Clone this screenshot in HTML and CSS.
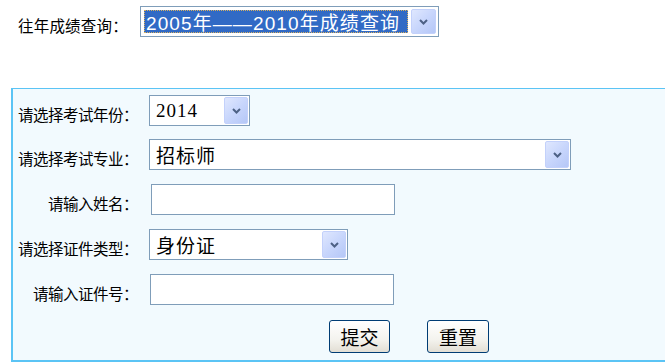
FILE: index.html
```html
<!DOCTYPE html>
<html lang="zh-CN">
<head>
<meta charset="utf-8">
<title>成绩查询</title>
<link rel="stylesheet" href="styles.css">
</head>
<body>
<div class="top">
  <span class="top-label">往年成绩查询：</span>
  <div class="sel sel-top">
    <span class="sel-text"><span class="hl">2005年——2010年成绩查询</span></span>
    <span class="sel-btn"><svg width="9" height="6" viewBox="0 0 9 6"><path d="M1 1 L4.5 4.5 L8 1" fill="none" stroke="#4d6185" stroke-width="2"/></svg></span>
  </div>
</div>

<form class="panel">
  <div class="grid">
    <label class="lbl">请选择考试年份：</label>
    <div class="ctl"><div class="sel sel-year"><span class="sel-text serif">2014</span><span class="sel-btn"><svg width="9" height="6" viewBox="0 0 9 6"><path d="M1 1 L4.5 4.5 L8 1" fill="none" stroke="#4d6185" stroke-width="2"/></svg></span></div></div>

    <label class="lbl">请选择考试专业：</label>
    <div class="ctl"><div class="sel sel-major"><span class="sel-text cjk">招标师</span><span class="sel-btn"><svg width="9" height="6" viewBox="0 0 9 6"><path d="M1 1 L4.5 4.5 L8 1" fill="none" stroke="#4d6185" stroke-width="2"/></svg></span></div></div>

    <label class="lbl">请输入姓名：</label>
    <div class="ctl"><input class="inp inp-name" type="text"></div>

    <label class="lbl">请选择证件类型：</label>
    <div class="ctl"><div class="sel sel-type"><span class="sel-text cjk">身份证</span><span class="sel-btn"><svg width="9" height="6" viewBox="0 0 9 6"><path d="M1 1 L4.5 4.5 L8 1" fill="none" stroke="#4d6185" stroke-width="2"/></svg></span></div></div>

    <label class="lbl">请输入证件号：</label>
    <div class="ctl"><input class="inp inp-id" type="text"></div>
  </div>
  <div class="btns">
    <button type="button" class="btn">提交</button>
    <button type="button" class="btn">重置</button>
  </div>
</form>
</body>
</html>
```

FILE: styles.css
```css
html, body {
  margin: 0;
  padding: 0;
  background: #ffffff;
  overflow: hidden;
}
body {
  font-family: "Noto Sans CJK SC", "Liberation Sans", sans-serif;
  font-size: 15px;
  color: #000;
  width: 665px;
  height: 362px;
}
.top {
  display: flex;
  align-items: center;
  padding-top: 6px;
  padding-left: 18px;
  height: 31px;
}
.top-label {
  width: 122px;
  padding-top: 7px;
  line-height: 15px;
  font-size: 15.5px;
  white-space: nowrap;
  letter-spacing: 0.2px;
}
.sel {
  display: flex;
  box-sizing: border-box;
  height: 31px;
  border: 1px solid #7f9db9;
  background: #fff;
  padding: 1px;
}
.sel-text {
  flex: 1;
  display: flex;
  align-items: center;
  padding-left: 5px;
  white-space: nowrap;
  overflow: hidden;
}
.serif {
  font-family: "Liberation Serif", serif;
  font-size: 19px;
  letter-spacing: 1px;
}
.cjk {
  font-size: 19px;
  letter-spacing: 1px;
}
.sel-btn {
  width: 24px;
  box-sizing: border-box;
  display: flex;
  align-items: center;
  justify-content: center;
  border-radius: 2px;
  background: linear-gradient(135deg, #dfe7fe 0%, #c8d6fc 50%, #b5c7f7 100%);
  border: 1px solid #c3d1fb;
}
.sel-top {
  width: 299px;
  padding: 2px;
}
.sel-top .sel-text {
  padding: 1px 3px 1px 1px;
}
.hl {
  display: flex;
  align-items: center;
  height: 23px;
  width: 265px;
  box-sizing: border-box;
  background: #316ac5;
  color: #fff;
  outline: 1px dotted #d8b060;
  outline-offset: -1px;
  padding-left: 2px;
  font-family: "Liberation Sans", "Noto Sans CJK SC", sans-serif;
  font-size: 19px;
  letter-spacing: 1.1px;
  overflow: hidden;
}
.sel-top .sel-btn {
  width: 25px;
}
.panel {
  margin: 51px 0 0 11px;
  width: 654px;
  box-sizing: border-box;
  background: #f2fafe;
  border-top: 1px solid #5bc4f5;
  border-left: 2px solid #5bc4f5;
  border-bottom: 2px solid #5bc4f5;
  padding-bottom: 7px;
}
.grid {
  display: grid;
  grid-template-columns: 127px 1fr;
  grid-template-rows: 43px 45px 45px 45px 45px;
  column-gap: 9px;
  align-items: center;
}
.lbl {
  text-align: right;
  padding-top: 7px;
  line-height: 15px;
  font-size: 15.5px;
  white-space: nowrap;
  letter-spacing: -0.5px;
  padding-right: 2px;
}
.ctl {
  display: flex;
  align-items: center;
}
.sel-year { width: 101px; }
.sel-major { width: 422px; }
.sel-type { width: 199px; }
.inp {
  box-sizing: border-box;
  height: 31px;
  border: 1px solid #7f9db9;
  background: #fff;
  margin: 0;
  padding: 0 4px;
  font-size: 16px;
}
.inp-name { width: 244px; margin-left: 2px; }
.inp-id { width: 244px; margin-left: 1px; }
.btns {
  display: flex;
  gap: 37px;
  margin-top: 8px;
  padding-left: 316px;
}
.btn {
  width: 61px;
  height: 33px;
  box-sizing: border-box;
  border: 1px solid #003c74;
  border-radius: 3px;
  background: linear-gradient(#ffffff 0%, #f4f3ee 60%, #e2ded4 100%);
  font-family: "Noto Sans CJK SC", sans-serif;
  font-size: 19px;
  color: #000;
  padding: 0;
  line-height: 1;
}
.btn + .btn { width: 62px; }
```
